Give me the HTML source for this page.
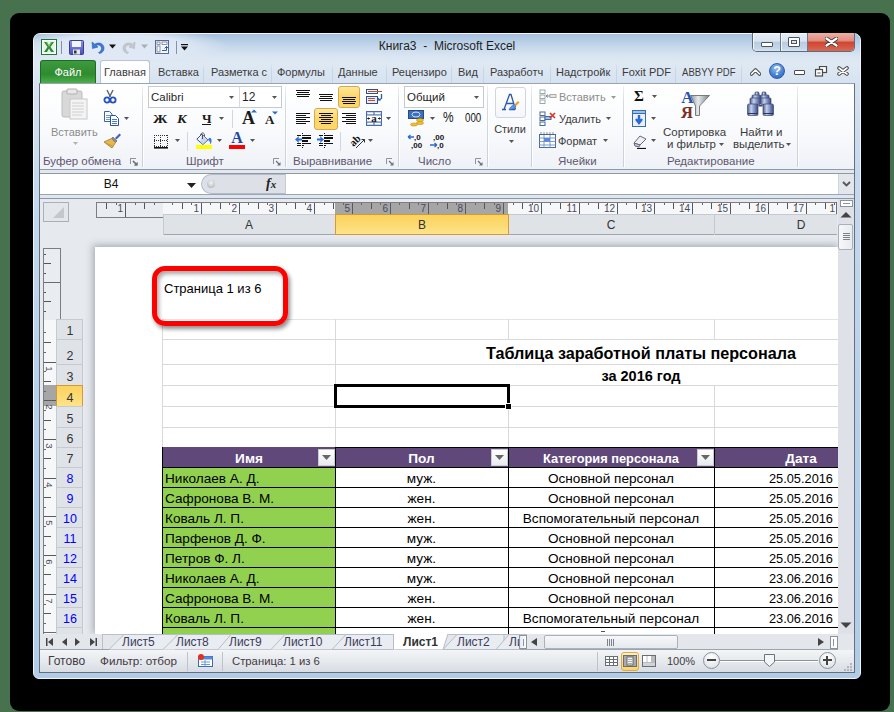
<!DOCTYPE html><html><head><meta charset="utf-8"><style>
html,body{margin:0;padding:0;width:894px;height:712px;overflow:hidden;background:#48714d;}
body{position:relative;font-family:"Liberation Sans",sans-serif;}
div,svg,span{position:absolute;box-sizing:border-box;}
.t{font-size:11px;color:#2b2b2b;}
</style></head><body>
<div style="left:10px;top:13px;width:880px;height:698px;background:#000;border-radius:9px;"></div>
<div style="left:33px;top:33px;width:828px;height:646px;background:linear-gradient(#a6c1de 0px,#c4d7eb 12px,#dae5f2 22px,#dfe9f4 30px,#d6e2f0 50px,#c5d9ee 140px,#b6d0ea 370px,#b0cce7 100%);border-radius:7px 7px 6px 6px;border:1px solid #eef5fc;"></div>
<div style="left:34px;top:34px;width:210px;height:26px;background:radial-gradient(ellipse 110px 20px at 85px 13px,rgba(224,233,245,0.95) 60%,rgba(224,233,245,0) 100%);"></div>
<svg style="left:41px;top:39px;" width="16" height="16" viewBox="0 0 16 16"><rect x="0.5" y="0.5" width="15" height="15" fill="#fff" stroke="#1e7a33"/><rect x="2" y="2" width="12" height="12" fill="#e8f4e8"/><path d="M3 3L6 3L8 6.5L10 3L13 3L9.5 8L13 13L10 13L8 9.5L6 13L3 13L6.5 8Z" fill="#2a8c3a"/><path d="M6 3L8 6.5L10 3L11 3L8 8L5 3Z" fill="#7ecb5a"/></svg>
<svg style="left:69px;top:40px;" width="15" height="15" viewBox="0 0 15 15"><defs><linearGradient id="sv" x1="0" y1="0" x2="0" y2="1"><stop offset="0" stop-color="#8f93e8"/><stop offset="1" stop-color="#4a4fb8"/></linearGradient></defs><rect x="0.5" y="0.5" width="14" height="14" rx="1" fill="url(#sv)" stroke="#3a3f90"/><rect x="3" y="1" width="9" height="6" fill="#f2f4fb"/><rect x="4" y="9.5" width="7" height="5" fill="#e4e6f2"/><rect x="5" y="10.5" width="2.5" height="3" fill="#333"/></svg>
<div style="left:61px;top:41px;width:1px;height:13px;background:#7f93ab;"></div>
<svg style="left:90px;top:40px;" width="15" height="14" viewBox="0 0 15 14"><path d="M2 2 L2.5 8.5 L8 7 L6 5.5 C8.5 4.2 11.5 5.5 11.5 8.5 C11.5 10.5 10 12 8.5 12.5 L9.5 13.5 C12.5 13 14 10.5 14 8.2 C14 3.5 8.5 1.5 4.8 4.2Z" fill="#3a7ad8" stroke="#2a5cb0" stroke-width="0.6"/></svg>
<svg style="left:109px;top:44px;" width="7" height="5" viewBox="0 0 7 5"><path d="M0 0.5H7L3.5 4.5Z" fill="#111"/></svg>
<svg style="left:122px;top:40px;" width="15" height="14" viewBox="0 0 15 14"><path d="M13 2 L12.5 8.5 L7 7 L9 5.5 C6.5 4.2 3.5 5.5 3.5 8.5 C3.5 10.5 5 12 6.5 12.5 L5.5 13.5 C2.5 13 1 10.5 1 8.2 C1 3.5 6.5 1.5 10.2 4.2Z" fill="#c4c9cf" stroke="#b0b6bd" stroke-width="0.6"/></svg>
<svg style="left:141px;top:44px;" width="7" height="5" viewBox="0 0 7 5"><path d="M0 0.5H7L3.5 4.5Z" fill="#a8b0b8"/></svg>
<svg style="left:155px;top:40px;" width="14" height="14" viewBox="0 0 14 14"><rect x="0.5" y="0.5" width="13" height="13" fill="#f4f7fb" stroke="#5a6a90"/><rect x="2" y="2" width="3" height="2.5" fill="#fff" stroke="#5a6a90" stroke-width="0.7"/><rect x="7" y="2" width="5" height="2.5" fill="#fff" stroke="#5a6a90" stroke-width="0.7"/><rect x="2" y="6" width="3" height="6" fill="#fff" stroke="#5a6a90" stroke-width="0.7"/><path d="M7 10.5H11.5M11.5 6V10.5M9.5 8.5L11.5 6.5L13 8" stroke="#2a5cb0" stroke-width="1" fill="none"/></svg>
<div style="left:176px;top:41px;width:1px;height:13px;background:#7f93ab;"></div>
<svg style="left:181px;top:44px;" width="7" height="7" viewBox="0 0 7 7"><rect x="0" y="0" width="7" height="1.2" fill="#111"/><path d="M0 2.5H7L3.5 6.5Z" fill="#111"/></svg>
<div style="left:330px;top:37px;height:18px;line-height:18px;width:234px;text-align:center;white-space:nowrap;font-size:12px;color:#1e1e1e;">Книга3 &nbsp;- &nbsp;Microsoft Excel</div>
<div style="left:752px;top:33px;width:103px;height:19px;border:1px solid #5f6b7a;border-top:none;border-radius:0 0 5px 5px;overflow:hidden;"><div style="left:0;top:0;width:28px;height:18px;background:linear-gradient(#e6edf5 0,#d9e4ef 45%,#b9cde2 52%,#c4d6ea 85%,#d8e4f0 100%);border-right:1px solid #6a7888;box-shadow:inset 1px 1px 0 #f4f8fc;"></div><div style="left:28px;top:0;width:27px;height:18px;background:linear-gradient(#e6edf5 0,#d9e4ef 45%,#b9cde2 52%,#c4d6ea 85%,#d8e4f0 100%);border-right:1px solid #6a7888;box-shadow:inset 1px 1px 0 #f4f8fc;"></div><div style="left:55px;top:0;width:47px;height:18px;background:linear-gradient(#eab0a6 0,#e08b7e 45%,#d2432f 50%,#d76a55 100%);"></div></div>
<div style="left:761px;top:42px;width:12px;height:5px;background:#fff;border:1px solid #4a5462;border-radius:1px;"></div>
<div style="left:788px;top:37px;width:12px;height:10px;background:#fff;border:1px solid #4a5462;border-radius:1px;"></div>
<div style="left:791px;top:40px;width:6px;height:4px;background:#dde3ea;border:1px solid #4a5462;"></div>
<svg style="left:825px;top:37px;" width="13" height="10" viewBox="0 0 13 10"><path d="M1.5 1.5 L11.5 8.5 M11.5 1.5 L1.5 8.5" stroke="#3b3b3b" stroke-width="4" stroke-linecap="round"/><path d="M1.5 1.5 L11.5 8.5 M11.5 1.5 L1.5 8.5" stroke="#fff" stroke-width="2.2" stroke-linecap="round"/></svg>
<div style="left:40px;top:60px;width:56px;height:23px;background:linear-gradient(#3e9a3e 0,#2f8a31 60%,#4bb048 100%);border:1px solid #1f6b24;border-bottom:none;border-radius:3px 3px 0 0;"></div>
<div style="left:40px;top:63px;height:18px;line-height:18px;width:56px;text-align:center;white-space:nowrap;font-size:11px;color:#fff;">Файл</div>
<div style="left:100px;top:60px;width:50px;height:24px;background:linear-gradient(#fff,#fbfcfd);border:1px solid #b6c3d4;border-bottom:none;border-radius:3px 3px 0 0;"></div>
<div style="left:104px;top:63px;height:18px;line-height:18px;width:45px;white-space:nowrap;font-size:11px;color:#3b3b3b;overflow:hidden;">Главная</div>
<div style="left:158px;top:63px;height:18px;line-height:18px;width:44px;white-space:nowrap;font-size:11px;color:#3b3b3b;overflow:hidden;">Вставка</div>
<div style="left:203px;top:63px;width:1px;height:20px;background:linear-gradient(rgba(200,212,228,0),#c8d4e2 40%,#c8d4e2);"></div>
<div style="left:211px;top:63px;height:18px;line-height:18px;width:58px;white-space:nowrap;font-size:11px;color:#3b3b3b;overflow:hidden;">Разметка с</div>
<div style="left:271px;top:63px;width:1px;height:20px;background:linear-gradient(rgba(200,212,228,0),#c8d4e2 40%,#c8d4e2);"></div>
<div style="left:277px;top:63px;height:18px;line-height:18px;width:52px;white-space:nowrap;font-size:11px;color:#3b3b3b;overflow:hidden;">Формулы</div>
<div style="left:332px;top:63px;width:1px;height:20px;background:linear-gradient(rgba(200,212,228,0),#c8d4e2 40%,#c8d4e2);"></div>
<div style="left:338px;top:63px;height:18px;line-height:18px;width:45px;white-space:nowrap;font-size:11px;color:#3b3b3b;overflow:hidden;">Данные</div>
<div style="left:386px;top:63px;width:1px;height:20px;background:linear-gradient(rgba(200,212,228,0),#c8d4e2 40%,#c8d4e2);"></div>
<div style="left:392px;top:63px;height:18px;line-height:18px;width:57px;white-space:nowrap;font-size:11px;color:#3b3b3b;overflow:hidden;">Рецензиро</div>
<div style="left:451px;top:63px;width:1px;height:20px;background:linear-gradient(rgba(200,212,228,0),#c8d4e2 40%,#c8d4e2);"></div>
<div style="left:458px;top:63px;height:18px;line-height:18px;width:23px;white-space:nowrap;font-size:11px;color:#3b3b3b;overflow:hidden;">Вид</div>
<div style="left:483px;top:63px;width:1px;height:20px;background:linear-gradient(rgba(200,212,228,0),#c8d4e2 40%,#c8d4e2);"></div>
<div style="left:490px;top:63px;height:18px;line-height:18px;width:57px;white-space:nowrap;font-size:11px;color:#3b3b3b;overflow:hidden;">Разработч</div>
<div style="left:550px;top:63px;width:1px;height:20px;background:linear-gradient(rgba(200,212,228,0),#c8d4e2 40%,#c8d4e2);"></div>
<div style="left:556px;top:63px;height:18px;line-height:18px;width:58px;white-space:nowrap;font-size:11px;color:#3b3b3b;overflow:hidden;">Надстройк</div>
<div style="left:616px;top:63px;width:1px;height:20px;background:linear-gradient(rgba(200,212,228,0),#c8d4e2 40%,#c8d4e2);"></div>
<div style="left:622px;top:63px;height:18px;line-height:18px;width:51px;white-space:nowrap;font-size:11px;color:#3b3b3b;overflow:hidden;">Foxit PDF</div>
<div style="left:675px;top:63px;width:1px;height:20px;background:linear-gradient(rgba(200,212,228,0),#c8d4e2 40%,#c8d4e2);"></div>
<div style="left:682px;top:63px;height:18px;line-height:18px;width:62px;white-space:nowrap;font-size:11px;color:#3b3b3b;overflow:hidden;transform:scaleX(0.87);transform-origin:0 0;">ABBYY PDF</div>
<div style="left:741px;top:63px;width:1px;height:20px;background:linear-gradient(rgba(200,212,228,0),#c8d4e2 40%,#c8d4e2);"></div>
<svg style="left:750px;top:67px;" width="11" height="9" viewBox="0 0 11 9"><path d="M1.5 7 L5.5 3 L9.5 7" fill="none" stroke="#4a4a4a" stroke-width="3.6" stroke-linejoin="round" stroke-linecap="round"/><path d="M1.5 7 L5.5 3 L9.5 7" fill="none" stroke="#fff" stroke-width="1.6" stroke-linejoin="round" stroke-linecap="round"/></svg>
<div style="left:769px;top:63px;width:16px;height:16px;border-radius:50%;background:radial-gradient(circle at 45% 30%,#8fc0f4,#3f78cc 65%,#2a5eb0);border:1px solid #2f5fa8;"></div>
<div style="left:769px;top:63px;height:16px;line-height:16px;width:16px;text-align:center;white-space:nowrap;font-size:12.5px;font-weight:bold;color:#fff;">?</div>
<div style="left:794px;top:70px;width:11px;height:5px;background:#fff;border:1px solid #4a4a4a;border-radius:1px;"></div>
<svg style="left:814px;top:66px;" width="14" height="11" viewBox="0 0 14 11"><rect x="5.5" y="0.5" width="7" height="6" fill="#fff" stroke="#4a4a4a" stroke-width="1.2"/><rect x="1.5" y="3.5" width="7" height="6.5" fill="#fff" stroke="#4a4a4a" stroke-width="1.2"/><rect x="3.5" y="6" width="3" height="2" fill="#aaa"/></svg>
<svg style="left:837px;top:66px;" width="12" height="10" viewBox="0 0 12 10"><path d="M2 2 L10 8 M10 2 L2 8" stroke="#4a4a4a" stroke-width="3.6" stroke-linecap="round"/><path d="M2 2 L10 8 M10 2 L2 8" stroke="#fff" stroke-width="1.6" stroke-linecap="round"/></svg>
<div style="left:39px;top:83px;width:816px;height:87px;background:linear-gradient(#ffffff 0,#fafbfd 50%,#eef1f6 100%);"></div>
<div style="left:39px;top:169px;width:816px;height:1px;background:#8f9aa8;"></div>
<div style="left:39px;top:170px;width:816px;height:3px;background:#e4e8ee;"></div>
<div style="left:39px;top:173px;width:816px;height:1px;background:#8f9aa8;"></div>
<div style="left:142px;top:86px;width:1px;height:81px;background:linear-gradient(rgba(200,208,220,0.3),#d5dbe4 20%,#c9d0da 100%);"></div>
<div style="left:143px;top:86px;width:1px;height:81px;background:rgba(255,255,255,0.9);"></div>
<div style="left:285px;top:86px;width:1px;height:81px;background:linear-gradient(rgba(200,208,220,0.3),#d5dbe4 20%,#c9d0da 100%);"></div>
<div style="left:286px;top:86px;width:1px;height:81px;background:rgba(255,255,255,0.9);"></div>
<div style="left:398px;top:86px;width:1px;height:81px;background:linear-gradient(rgba(200,208,220,0.3),#d5dbe4 20%,#c9d0da 100%);"></div>
<div style="left:399px;top:86px;width:1px;height:81px;background:rgba(255,255,255,0.9);"></div>
<div style="left:487px;top:86px;width:1px;height:81px;background:linear-gradient(rgba(200,208,220,0.3),#d5dbe4 20%,#c9d0da 100%);"></div>
<div style="left:488px;top:86px;width:1px;height:81px;background:rgba(255,255,255,0.9);"></div>
<div style="left:531px;top:86px;width:1px;height:81px;background:linear-gradient(rgba(200,208,220,0.3),#d5dbe4 20%,#c9d0da 100%);"></div>
<div style="left:532px;top:86px;width:1px;height:81px;background:rgba(255,255,255,0.9);"></div>
<div style="left:623px;top:86px;width:1px;height:81px;background:linear-gradient(rgba(200,208,220,0.3),#d5dbe4 20%,#c9d0da 100%);"></div>
<div style="left:624px;top:86px;width:1px;height:81px;background:rgba(255,255,255,0.9);"></div>
<div style="left:797px;top:86px;width:1px;height:81px;background:linear-gradient(rgba(200,208,220,0.3),#d5dbe4 20%,#c9d0da 100%);"></div>
<div style="left:798px;top:86px;width:1px;height:81px;background:rgba(255,255,255,0.9);"></div>
<div style="left:43px;top:153px;height:16px;line-height:16px;white-space:nowrap;font-size:11.5px;color:#5f5770;">Буфер обмена</div>
<div style="left:186px;top:153px;height:16px;line-height:16px;white-space:nowrap;font-size:11.5px;color:#5f5770;">Шрифт</div>
<div style="left:293px;top:153px;height:16px;line-height:16px;white-space:nowrap;font-size:11.5px;color:#5f5770;">Выравнивание</div>
<div style="left:418px;top:153px;height:16px;line-height:16px;white-space:nowrap;font-size:11.5px;color:#5f5770;">Число</div>
<div style="left:558px;top:153px;height:16px;line-height:16px;white-space:nowrap;font-size:11.5px;color:#5f5770;">Ячейки</div>
<div style="left:667px;top:153px;height:16px;line-height:16px;white-space:nowrap;font-size:11.5px;color:#5f5770;">Редактирование</div>
<svg style="left:130px;top:158px;" width="8" height="8" viewBox="0 0 8 8"><path d="M0.5 6V0.5H6" fill="none" stroke="#8a939e"/><path d="M3 3L6.5 6.5" stroke="#6a737e" stroke-width="1.2"/><path d="M7.5 4V7.5H4Z" fill="#6a737e"/></svg>
<svg style="left:273px;top:158px;" width="8" height="8" viewBox="0 0 8 8"><path d="M0.5 6V0.5H6" fill="none" stroke="#8a939e"/><path d="M3 3L6.5 6.5" stroke="#6a737e" stroke-width="1.2"/><path d="M7.5 4V7.5H4Z" fill="#6a737e"/></svg>
<svg style="left:386px;top:158px;" width="8" height="8" viewBox="0 0 8 8"><path d="M0.5 6V0.5H6" fill="none" stroke="#8a939e"/><path d="M3 3L6.5 6.5" stroke="#6a737e" stroke-width="1.2"/><path d="M7.5 4V7.5H4Z" fill="#6a737e"/></svg>
<svg style="left:475px;top:158px;" width="8" height="8" viewBox="0 0 8 8"><path d="M0.5 6V0.5H6" fill="none" stroke="#8a939e"/><path d="M3 3L6.5 6.5" stroke="#6a737e" stroke-width="1.2"/><path d="M7.5 4V7.5H4Z" fill="#6a737e"/></svg>
<svg style="left:61px;top:88px;" width="28" height="32" viewBox="0 0 28 32"><rect x="1" y="3" width="20" height="26" rx="2" fill="#d8d8d8" stroke="#bdbdbd"/><rect x="6" y="1" width="10" height="5" rx="1" fill="#e8e8e8" stroke="#b0b0b0"/><rect x="9" y="11" width="17" height="20" fill="#f4f4f4" stroke="#c8c8c8"/><path d="M11 15H23M11 18H23M11 21H23M11 24H23M11 27H21" stroke="#d0d0d0"/></svg>
<div style="left:51px;top:124px;height:16px;line-height:16px;white-space:nowrap;font-size:11px;color:#8c8c8c;">Вставить</div>
<svg style="left:73px;top:142px;" width="5" height="3" viewBox="0 0 5 3"><path d="M0 0H5L2.5 3Z" fill="#b0b0b0"/></svg>
<svg style="left:103px;top:89px;" width="14" height="15" viewBox="0 0 14 15"><path d="M4 1 L7.5 8 M10 1 L6.5 8" stroke="#5a6470" stroke-width="1.4"/><circle cx="4" cy="11" r="2.6" fill="none" stroke="#2450c0" stroke-width="1.8"/><circle cx="10" cy="11" r="2.6" fill="none" stroke="#2450c0" stroke-width="1.8"/></svg>
<svg style="left:103px;top:111px;" width="17" height="15" viewBox="0 0 17 15"><path d="M1.5 0.5H6.5L9 3V10.5H1.5Z" fill="#fff" stroke="#3a62b0"/><path d="M3 4.5H7M3 6.5H7M3 8.5H7" stroke="#6a9ad8"/><path d="M7.5 4.5H12.5L15.5 7.5V14.5H7.5Z" fill="#fff" stroke="#2a52a0"/><path d="M9 8.5H14M9 10.5H14M9 12.5H14" stroke="#4a7ad0"/></svg>
<svg style="left:124px;top:117px;" width="5" height="3" viewBox="0 0 5 3"><path d="M0 0H5L2.5 3Z" fill="#555"/></svg>
<svg style="left:103px;top:132px;" width="18" height="17" viewBox="0 0 18 17"><path d="M12 6 L16.5 1.5 L18 3 L13.5 7.5Z" fill="#3a62c0"/><path d="M10 5 L14 9 L12.5 10.5 L8.5 6.5Z" fill="#8a8f98" stroke="#555" stroke-width="0.6"/><path d="M1 10 L8.5 6.5 L12.5 10.5 L9 16Z" fill="#e8b850" stroke="#9a7628" stroke-width="0.8"/><path d="M3 11L9.5 14" stroke="#c89a3a"/></svg>
<div style="left:148px;top:86px;width:134px;height:22px;background:#fff;border:1px solid #c2cad6;"></div>
<div style="left:239px;top:87px;width:1px;height:20px;background:#d6dce5;"></div>
<div style="left:151px;top:89px;height:17px;line-height:17px;white-space:nowrap;font-size:11.5px;color:#1f1f1f;">Calibri</div>
<svg style="left:229px;top:96px;" width="5" height="3" viewBox="0 0 5 3"><path d="M0 0H5L2.5 3Z" fill="#555"/></svg>
<div style="left:242px;top:89px;height:16px;line-height:16px;white-space:nowrap;font-size:12px;color:#1f1f1f;">12</div>
<svg style="left:272px;top:96px;" width="5" height="3" viewBox="0 0 5 3"><path d="M0 0H5L2.5 3Z" fill="#555"/></svg>
<div style="left:153px;top:110px;height:17px;line-height:17px;white-space:nowrap;font-family:'Liberation Serif',serif;font-weight:bold;color:#1a1a1a;font-size:13px;transform:scaleX(1.12);transform-origin:0 0;">Ж</div>
<div style="left:177px;top:110px;height:17px;line-height:17px;white-space:nowrap;font-family:'Liberation Serif',serif;font-weight:bold;color:#1a1a1a;font-size:13px;transform:scaleX(1.1);transform-origin:0 0;"><i>К</i></div>
<div style="left:202px;top:110px;height:17px;line-height:17px;white-space:nowrap;font-family:'Liberation Serif',serif;font-weight:bold;color:#1a1a1a;font-size:13px;">Ч</div>
<div style="left:202px;top:124px;width:9px;height:1px;background:#1a1a1a;"></div>
<svg style="left:219px;top:117px;" width="5" height="3" viewBox="0 0 5 3"><path d="M0 0H5L2.5 3Z" fill="#555"/></svg>
<div style="left:232px;top:110px;width:1px;height:18px;background:#d2d7de;"></div>
<div style="left:242px;top:109px;height:18px;line-height:18px;white-space:nowrap;font-family:'Liberation Serif',serif;font-weight:bold;color:#1a1a1a;font-size:18px;font-weight:bold;">A</div>
<svg style="left:251px;top:109px;" width="6" height="4" viewBox="0 0 6 4"><path d="M0 3.5L3 0.5L6 3.5Z" fill="#2a6ad0"/></svg>
<div style="left:265px;top:113px;height:14px;line-height:14px;white-space:nowrap;font-family:'Liberation Serif',serif;font-weight:bold;color:#1a1a1a;font-size:13px;">A</div>
<svg style="left:272px;top:111px;" width="6" height="4" viewBox="0 0 6 4"><path d="M0 0.5L3 3.5L6 0.5Z" fill="#2a6ad0"/></svg>
<svg style="left:154px;top:135px;" width="14" height="14" viewBox="0 0 14 14"><g fill="#333"><rect x="0" y="0" width="1" height="1"/><rect x="2" y="0" width="1" height="1"/><rect x="4" y="0" width="1" height="1"/><rect x="6" y="0" width="1" height="1"/><rect x="8" y="0" width="1" height="1"/><rect x="10" y="0" width="1" height="1"/><rect x="12" y="0" width="1" height="1"/><rect x="0" y="5" width="1" height="1"/><rect x="2" y="5" width="1" height="1"/><rect x="4" y="5" width="1" height="1"/><rect x="6" y="5" width="1" height="1"/><rect x="8" y="5" width="1" height="1"/><rect x="10" y="5" width="1" height="1"/><rect x="12" y="5" width="1" height="1"/><rect x="0" y="11" width="1" height="1"/><rect x="2" y="11" width="1" height="1"/><rect x="4" y="11" width="1" height="1"/><rect x="6" y="11" width="1" height="1"/><rect x="8" y="11" width="1" height="1"/><rect x="10" y="11" width="1" height="1"/><rect x="12" y="11" width="1" height="1"/><rect x="0" y="0" width="1" height="1"/><rect x="0" y="2" width="1" height="1"/><rect x="0" y="4" width="1" height="1"/><rect x="0" y="6" width="1" height="1"/><rect x="0" y="8" width="1" height="1"/><rect x="0" y="10" width="1" height="1"/><rect x="6" y="0" width="1" height="1"/><rect x="6" y="2" width="1" height="1"/><rect x="6" y="4" width="1" height="1"/><rect x="6" y="6" width="1" height="1"/><rect x="6" y="8" width="1" height="1"/><rect x="6" y="10" width="1" height="1"/><rect x="13" y="0" width="1" height="1"/><rect x="13" y="2" width="1" height="1"/><rect x="13" y="4" width="1" height="1"/><rect x="13" y="6" width="1" height="1"/><rect x="13" y="8" width="1" height="1"/><rect x="13" y="10" width="1" height="1"/></g><rect x="0" y="12" width="14" height="1.6" fill="#111"/></svg>
<svg style="left:175px;top:139px;" width="5" height="3" viewBox="0 0 5 3"><path d="M0 0H5L2.5 3Z" fill="#555"/></svg>
<div style="left:187px;top:132px;width:1px;height:19px;background:#d2d7de;"></div>
<svg style="left:196px;top:132px;" width="18" height="17" viewBox="0 0 18 17"><path d="M0.8 7.2 L6 2 L12 8 L6.8 12.5Z" fill="#f4f7fc" stroke="#2f4f8a" stroke-width="1"/><path d="M6 2 L12 8 L6.8 12.5 L4 10Z" fill="#b8c8e4" opacity="0.7"/><path d="M4.5 3.5 C4.5 0 9 0 8.5 4" fill="none" stroke="#555" stroke-width="1"/><path d="M6.5 3 V7" stroke="#555" stroke-width="1"/><path d="M12 8 C13 5 15 5 15.5 8 C15.8 10 15 12 14 12 C14.5 10 13.5 9 12 8Z" fill="#3a78d8"/><rect x="0" y="13" width="16" height="4" fill="#ffff00"/></svg>
<svg style="left:217px;top:139px;" width="5" height="3" viewBox="0 0 5 3"><path d="M0 0H5L2.5 3Z" fill="#555"/></svg>
<div style="left:229px;top:129px;height:17px;line-height:17px;width:16px;text-align:center;white-space:nowrap;font-family:'Liberation Serif',serif;font-weight:bold;color:#1a1a1a;font-size:16px;color:#2246a0;">A</div>
<div style="left:229px;top:145px;width:16px;height:4px;background:#f00;"></div>
<svg style="left:250px;top:139px;" width="5" height="3" viewBox="0 0 5 3"><path d="M0 0H5L2.5 3Z" fill="#555"/></svg>
<div style="left:296px;top:90px;width:14px;height:1px;background:#111;"></div>
<div style="left:297px;top:92px;width:12px;height:1px;background:#111;"></div>
<div style="left:296px;top:94px;width:14px;height:1px;background:#111;"></div>
<div style="left:297px;top:96px;width:12px;height:1px;background:#111;"></div>
<div style="left:319px;top:94px;width:14px;height:1px;background:#111;"></div>
<div style="left:320px;top:96px;width:12px;height:1px;background:#111;"></div>
<div style="left:319px;top:98px;width:14px;height:1px;background:#111;"></div>
<div style="left:320px;top:100px;width:12px;height:1px;background:#111;"></div>
<div style="left:338px;top:86px;width:22px;height:22px;border:1px solid #d6a84a;border-radius:3px;background:linear-gradient(#fde89a,#fbd56a 50%,#fcd86c);"></div>
<div style="left:342px;top:97px;width:14px;height:1px;background:#111;"></div>
<div style="left:343px;top:99px;width:12px;height:1px;background:#111;"></div>
<div style="left:342px;top:101px;width:14px;height:1px;background:#111;"></div>
<div style="left:343px;top:103px;width:12px;height:1px;background:#111;"></div>
<svg style="left:366px;top:88px;" width="18" height="17" viewBox="0 0 18 17"><rect x="0.5" y="1.5" width="11" height="4" fill="#eef4fb" stroke="#2f4f86"/><path d="M2 3.5H16" stroke="#c0502a" stroke-width="1"/><rect x="0.5" y="8.5" width="11" height="7" fill="#e4eefa" stroke="#2f4f86"/><path d="M2 10.5H9M2 12.5H9" stroke="#c0502a"/><path d="M15.5 6V10.5L13 12" stroke="#2f5aa0" stroke-width="1.3" fill="none"/><path d="M12 9.5V12.5H15Z" fill="#2f5aa0"/></svg>
<div style="left:296px;top:113px;width:14px;height:1px;background:#111;"></div>
<div style="left:296px;top:115px;width:10px;height:1px;background:#111;"></div>
<div style="left:296px;top:117px;width:14px;height:1px;background:#111;"></div>
<div style="left:296px;top:119px;width:10px;height:1px;background:#111;"></div>
<div style="left:296px;top:121px;width:14px;height:1px;background:#111;"></div>
<div style="left:296px;top:123px;width:10px;height:1px;background:#111;"></div>
<div style="left:314px;top:108px;width:24px;height:22px;border:1px solid #d6a84a;border-radius:3px;background:linear-gradient(#fde89a,#fbd56a 50%,#fcd86c);"></div>
<div style="left:319px;top:113px;width:14px;height:1px;background:#111;"></div>
<div style="left:321px;top:115px;width:10px;height:1px;background:#111;"></div>
<div style="left:319px;top:117px;width:14px;height:1px;background:#111;"></div>
<div style="left:321px;top:119px;width:10px;height:1px;background:#111;"></div>
<div style="left:319px;top:121px;width:14px;height:1px;background:#111;"></div>
<div style="left:321px;top:123px;width:10px;height:1px;background:#111;"></div>
<div style="left:342px;top:113px;width:14px;height:1px;background:#111;"></div>
<div style="left:346px;top:115px;width:10px;height:1px;background:#111;"></div>
<div style="left:342px;top:117px;width:14px;height:1px;background:#111;"></div>
<div style="left:346px;top:119px;width:10px;height:1px;background:#111;"></div>
<div style="left:342px;top:121px;width:14px;height:1px;background:#111;"></div>
<div style="left:346px;top:123px;width:10px;height:1px;background:#111;"></div>
<svg style="left:366px;top:111px;" width="16" height="15" viewBox="0 0 16 15"><rect x="0.5" y="0.5" width="15" height="14" fill="#c8d8ee" stroke="#4a6aa8"/><path d="M2 2.5H7M9 2.5H14M2 12.5H7M9 12.5H14" stroke="#fff" stroke-width="1.2"/><path d="M8 0.5V4M8 11V14.5" stroke="#4a6aa8"/><rect x="1" y="4" width="14" height="7" fill="#fff"/><path d="M0.5 4H15.5M0.5 11H15.5" stroke="#4a6aa8"/><path d="M1.5 7.5H4M12 7.5H14.5" stroke="#222"/><path d="M2.5 6.5L1.5 7.5L2.5 8.5M13.5 6.5L14.5 7.5L13.5 8.5" stroke="#222" fill="none"/><text x="8" y="10.5" font-size="11" font-family="Liberation Serif" font-weight="bold" text-anchor="middle" fill="#222">a</text></svg>
<svg style="left:386px;top:117px;" width="5" height="3" viewBox="0 0 5 3"><path d="M0 0H5L2.5 3Z" fill="#555"/></svg>
<div style="left:302px;top:133px;width:1px;height:1px;background:#111;"></div>
<div style="left:302px;top:147px;width:1px;height:1px;background:#111;"></div>
<div style="left:297px;top:135px;width:4px;height:1px;background:#111;"></div>
<div style="left:297px;top:143px;width:4px;height:1px;background:#111;"></div>
<div style="left:297px;top:145px;width:4px;height:1px;background:#111;"></div>
<div style="left:302px;top:135px;width:9px;height:1px;background:#111;"></div>
<div style="left:302px;top:137px;width:9px;height:2px;background:#111;"></div>
<div style="left:302px;top:140px;width:6px;height:2px;background:#111;"></div>
<div style="left:302px;top:143px;width:9px;height:1px;background:#111;"></div>
<div style="left:302px;top:145px;width:2px;height:1px;background:#111;"></div>
<svg style="left:295px;top:136px;" width="7" height="7" viewBox="0 0 7 7"><path d="M0 3.5 L4 0 L3.5 2.5 H7 V4.5 H3.5 L4 7Z" fill="#2f6ad8"/></svg>
<div style="left:324px;top:133px;width:1px;height:1px;background:#111;"></div>
<div style="left:324px;top:147px;width:1px;height:1px;background:#111;"></div>
<div style="left:319px;top:135px;width:4px;height:1px;background:#111;"></div>
<div style="left:319px;top:143px;width:4px;height:1px;background:#111;"></div>
<div style="left:319px;top:145px;width:4px;height:1px;background:#111;"></div>
<div style="left:324px;top:135px;width:9px;height:1px;background:#111;"></div>
<div style="left:324px;top:137px;width:9px;height:2px;background:#111;"></div>
<div style="left:324px;top:140px;width:6px;height:2px;background:#111;"></div>
<div style="left:324px;top:143px;width:9px;height:1px;background:#111;"></div>
<div style="left:324px;top:145px;width:2px;height:1px;background:#111;"></div>
<svg style="left:317px;top:136px;" width="7" height="7" viewBox="0 0 7 7"><path d="M7 3.5 L3 0 L3.5 2.5 H0 V4.5 H3.5 L3 7Z" fill="#2f6ad8"/></svg>
<div style="left:340px;top:132px;width:1px;height:19px;background:#d2d7de;"></div>
<svg style="left:348px;top:132px;" width="20" height="18" viewBox="0 0 20 18"><text x="0" y="0" font-size="10.5" font-family="Liberation Serif" font-weight="bold" fill="#111" transform="translate(5.5 15) rotate(-45)">ab</text><path d="M8 16 L16.5 7.5" stroke="#333" stroke-width="1"/><path d="M13.5 7.5H16.5V10.5" stroke="#333" fill="none"/></svg>
<svg style="left:368px;top:139px;" width="5" height="3" viewBox="0 0 5 3"><path d="M0 0H5L2.5 3Z" fill="#555"/></svg>
<div style="left:404px;top:86px;width:80px;height:22px;background:#fff;border:1px solid #c2cad6;"></div>
<div style="left:407px;top:89px;height:17px;line-height:17px;white-space:nowrap;font-size:11.5px;color:#1f1f1f;">Общий</div>
<svg style="left:474px;top:96px;" width="5" height="3" viewBox="0 0 5 3"><path d="M0 0H5L2.5 3Z" fill="#555"/></svg>
<svg style="left:408px;top:110px;" width="17" height="17" viewBox="0 0 17 17"><rect x="0.5" y="0.5" width="15" height="8" fill="#3a70c0" stroke="#2a4a80"/><ellipse cx="8" cy="4.5" rx="4" ry="2.5" fill="none" stroke="#cfe0f8"/><ellipse cx="12" cy="10" rx="3.5" ry="1.5" fill="#f2c230" stroke="#b88a10" stroke-width="0.6"/><ellipse cx="12" cy="13" rx="3.5" ry="1.5" fill="#f2c230" stroke="#b88a10" stroke-width="0.6"/><ellipse cx="6" cy="14.5" rx="3.5" ry="1.5" fill="#f2c230" stroke="#b88a10" stroke-width="0.6"/></svg>
<svg style="left:430px;top:117px;" width="5" height="3" viewBox="0 0 5 3"><path d="M0 0H5L2.5 3Z" fill="#555"/></svg>
<div style="left:443px;top:109px;height:17px;line-height:17px;white-space:nowrap;font-size:14px;color:#1a1a1a;transform:scaleX(0.85);transform-origin:0 0;">%</div>
<div style="left:465px;top:110px;height:17px;line-height:17px;white-space:nowrap;font-size:12.5px;color:#1a1a1a;transform:scaleX(0.78);transform-origin:0 0;">000</div>
<svg style="left:407px;top:132px;" width="18" height="18" viewBox="0 0 18 18"><text x="7" y="7.5" font-size="8" font-family="Liberation Sans" font-weight="bold" fill="#111">,0</text><text x="4" y="16" font-size="8" font-family="Liberation Sans" font-weight="bold" fill="#111">,00</text><path d="M1 5H7M1 5L3.5 3M1 5L3.5 7" stroke="#2a6ad0" stroke-width="1.3"/></svg>
<svg style="left:429px;top:132px;" width="18" height="18" viewBox="0 0 18 18"><text x="4" y="7.5" font-size="8" font-family="Liberation Sans" font-weight="bold" fill="#111">,00</text><text x="8" y="16" font-size="8" font-family="Liberation Sans" font-weight="bold" fill="#111">,0</text><path d="M1 13H8M8 13L5.5 11M8 13L5.5 15" stroke="#2a6ad0" stroke-width="1.3"/></svg>
<div style="left:495px;top:87px;width:31px;height:31px;border:1px solid #cfd6df;border-radius:3px;background:linear-gradient(#fff,#f4f6f9);"></div>
<svg style="left:501px;top:93px;" width="20" height="18" viewBox="0 0 20 18"><path d="M1 16.5H5M9 16.5H14M3 16.5L8.5 1.5H10L14.5 16.5M5.5 10.5H12" fill="none" stroke="#2d56b0" stroke-width="1.3"/><path d="M8 17 C9 14 11 12.5 13.5 11.5 L15 13 C14 15 12 16.5 8 17Z" fill="#5a9ae8" stroke="#2a5ab0" stroke-width="0.6"/><path d="M13.5 11.5 L17 8 L18.5 9.5 L15 13Z" fill="#f0a020"/></svg>
<div style="left:494px;top:121px;height:16px;line-height:16px;width:32px;text-align:center;white-space:nowrap;font-size:11px;color:#3b3b3b;">Стили</div>
<svg style="left:509px;top:140px;" width="5" height="3" viewBox="0 0 5 3"><path d="M0 0H5L2.5 3Z" fill="#555"/></svg>
<svg style="left:539px;top:89px;" width="18" height="16" viewBox="0 0 18 16"><rect x="1" y="1" width="5" height="3.5" fill="#fff" stroke="#9aa"/><rect x="1" y="6" width="5" height="3.5" fill="#fff" stroke="#9aa"/><rect x="1" y="11" width="5" height="3.5" fill="#fff" stroke="#9aa"/><rect x="11" y="5.5" width="6" height="3" fill="#e8e8e8" stroke="#aaa"/><path d="M7 7H11M7 7L9 5.5M7 7L9 8.5" stroke="#888"/></svg>
<div style="left:559px;top:89px;height:16px;line-height:16px;white-space:nowrap;font-size:11px;color:#8c8c8c;">Вставить</div>
<svg style="left:611px;top:96px;" width="5" height="3" viewBox="0 0 5 3"><path d="M0 0H5L2.5 3Z" fill="#9a9a9a"/></svg>
<svg style="left:539px;top:111px;" width="18" height="15" viewBox="0 0 18 15"><rect x="1" y="1" width="5" height="3.5" fill="#fff" stroke="#4a6a9a"/><rect x="1" y="6" width="5" height="3.5" fill="#fff" stroke="#4a6a9a"/><rect x="1" y="11" width="5" height="3.5" fill="#fff" stroke="#4a6a9a"/><rect x="6" y="5.5" width="6" height="3" fill="#9ec0ea" stroke="#4a6a9a"/><path d="M11 2L16 7M16 2L11 7" stroke="#e03020" stroke-width="1.6"/></svg>
<div style="left:559px;top:111px;height:16px;line-height:16px;white-space:nowrap;font-size:11px;color:#3b3b3b;">Удалить</div>
<svg style="left:606px;top:117px;" width="5" height="3" viewBox="0 0 5 3"><path d="M0 0H5L2.5 3Z" fill="#555"/></svg>
<svg style="left:539px;top:132px;" width="18" height="16" viewBox="0 0 18 16"><rect x="0.5" y="2.5" width="16" height="13" fill="#fff" stroke="#4a6a9a"/><path d="M0.5 6H16.5M0.5 9.5H16.5M0.5 13H16.5M5 2.5V15.5M11 2.5V15.5" stroke="#7a9acb"/><rect x="5" y="6" width="6" height="3.5" fill="#5a8ad8"/><path d="M2 0.5V3M5 0.5V3M8 0.5V3M11 0.5V3M14 0.5V3" stroke="#333" stroke-dasharray="1 1"/></svg>
<div style="left:558px;top:133px;height:16px;line-height:16px;white-space:nowrap;font-size:11px;color:#3b3b3b;">Формат</div>
<svg style="left:603px;top:139px;" width="5" height="3" viewBox="0 0 5 3"><path d="M0 0H5L2.5 3Z" fill="#555"/></svg>
<div style="left:634px;top:88px;height:17px;line-height:17px;white-space:nowrap;font-family:'Liberation Serif',serif;font-size:15px;font-weight:bold;color:#111;">Σ</div>
<svg style="left:652px;top:95px;" width="5" height="3" viewBox="0 0 5 3"><path d="M0 0H5L2.5 3Z" fill="#555"/></svg>
<svg style="left:632px;top:110px;" width="15" height="17" viewBox="0 0 15 17"><rect x="0.5" y="0.5" width="13" height="16" fill="#e8f0fb" stroke="#3a6ab0"/><rect x="0.5" y="0.5" width="13" height="3" fill="#9cc0ec" stroke="#3a6ab0"/><path d="M7 5V12M4 9L7 13L10 9" stroke="#2a6ad0" stroke-width="2.4" fill="none"/></svg>
<svg style="left:651px;top:117px;" width="5" height="3" viewBox="0 0 5 3"><path d="M0 0H5L2.5 3Z" fill="#555"/></svg>
<svg style="left:632px;top:134px;" width="16" height="15" viewBox="0 0 16 15"><path d="M2 9 L8 2 L14 5 L8 11Z" fill="#f0f0f4" stroke="#606a78"/><path d="M2 9 L8 11 L7 13 L3 12Z" fill="#c8ccd8" stroke="#606a78"/><path d="M5 14.5H14" stroke="#111" stroke-width="1.2"/></svg>
<svg style="left:651px;top:139px;" width="5" height="3" viewBox="0 0 5 3"><path d="M0 0H5L2.5 3Z" fill="#555"/></svg>
<svg style="left:679px;top:88px;" width="32" height="32" viewBox="0 0 32 32"><defs><linearGradient id="fn" x1="0" y1="0" x2="1" y2="0"><stop offset="0" stop-color="#8a9096"/><stop offset="0.4" stop-color="#e8eaec"/><stop offset="1" stop-color="#7a8086"/></linearGradient></defs><path d="M11.5 7.5 H30.5 L20.5 18 V27.5 H16.5 V18 Z" fill="url(#fn)" stroke="#6a7076" stroke-width="0.9"/><text x="8.5" y="15" font-size="17" font-family="Liberation Serif" font-weight="bold" text-anchor="middle" fill="#2a52b0">A</text><text x="8" y="30" font-size="16.5" font-family="Liberation Serif" font-weight="bold" text-anchor="middle" fill="#7a3024">Я</text></svg>
<div style="left:663px;top:124px;height:16px;line-height:16px;white-space:nowrap;font-size:11.5px;color:#3b3b3b;">Сортировка</div>
<div style="left:667px;top:136px;height:16px;line-height:16px;white-space:nowrap;font-size:11.5px;color:#3b3b3b;">и фильтр</div>
<svg style="left:719px;top:143px;" width="5" height="3" viewBox="0 0 5 3"><path d="M0 0H5L2.5 3Z" fill="#555"/></svg>
<svg style="left:746px;top:91px;" width="29" height="26" viewBox="0 0 29 26"><defs><linearGradient id="bn" x1="0" y1="0" x2="1" y2="0"><stop offset="0" stop-color="#4a5a8a"/><stop offset="0.35" stop-color="#c4d0ec"/><stop offset="0.6" stop-color="#8a9ccc"/><stop offset="1" stop-color="#3a4a7a"/></linearGradient></defs><g stroke="#3a4670" stroke-width="0.7" fill="url(#bn)"><rect x="9" y="1" width="4" height="3.5" rx="1"/><rect x="16" y="1" width="4" height="3.5" rx="1"/><rect x="6" y="4" width="8.5" height="3.5" rx="1"/><rect x="14.5" y="4" width="8.5" height="3.5" rx="1"/><rect x="4" y="7" width="10.5" height="6.5" rx="1"/><rect x="14.5" y="7" width="10.5" height="6.5" rx="1"/><rect x="1.5" y="13" width="10.5" height="11.5" rx="1.5"/><rect x="17" y="13" width="10.5" height="11.5" rx="1.5"/></g><path d="M2 22.5H11.5M17.5 22.5H27" stroke="#2a3660" stroke-width="1.2"/><rect x="12.5" y="14" width="4" height="1.5" fill="#3a4670"/></svg>
<div style="left:740px;top:124px;height:16px;line-height:16px;white-space:nowrap;font-size:11.5px;color:#3b3b3b;">Найти и</div>
<div style="left:733px;top:136px;height:16px;line-height:16px;white-space:nowrap;font-size:11.5px;color:#3b3b3b;">выделить</div>
<svg style="left:786px;top:143px;" width="5" height="3" viewBox="0 0 5 3"><path d="M0 0H5L2.5 3Z" fill="#555"/></svg>
<svg style="left:130px;top:158px;" width="8" height="8" viewBox="0 0 8 8"><path d="M0.5 6V0.5H6" fill="none" stroke="#8a939e"/><path d="M3 3L6.5 6.5" stroke="#6a737e" stroke-width="1.2"/><path d="M7.5 4V7.5H4Z" fill="#6a737e"/></svg>
<div style="left:39px;top:174px;width:816px;height:21px;background:#fff;"></div>
<div style="left:39px;top:194px;width:816px;height:1px;background:#9aa6b4;"></div>
<div style="left:39px;top:195px;width:816px;height:3px;background:#dfe6ef;"></div>
<div style="left:39px;top:198px;width:816px;height:1px;background:#8a96a6;"></div>
<div style="left:88px;top:176px;height:17px;line-height:17px;width:46px;text-align:center;white-space:nowrap;font-size:12px;color:#111;">B4</div>
<svg style="left:187px;top:183px;" width="9" height="5" viewBox="0 0 9 5"><path d="M0 0H9L4.5 5Z" fill="#222"/></svg>
<div style="left:201px;top:174px;width:85px;height:20px;background:#dde1e7;border:1px solid #b4bcc7;border-right:1px solid #c6ccd4;border-radius:10px 0 0 10px;"></div>
<div style="left:207px;top:180px;width:8px;height:8px;border-radius:50%;background:radial-gradient(circle at 50% 35%,#f4f4f4,#a8acb2);"></div>
<div style="left:266px;top:175px;height:18px;line-height:18px;white-space:nowrap;font-family:'Liberation Serif',serif;font-weight:bold;font-size:14px;color:#222;"><i>f<span style="position:static;font-size:11px;">x</span></i></div>
<div style="left:838px;top:174px;width:16px;height:20px;background:#e3e7ec;border-left:1px solid #d0d6de;"></div>
<svg style="left:842px;top:181px;" width="9" height="6" viewBox="0 0 9 6"><path d="M1 1L4.5 4.5L8 1" fill="none" stroke="#555" stroke-width="1.8"/></svg>
<div style="left:39px;top:199px;width:799px;height:435px;background:#e6e9ee;"></div>
<div style="left:43px;top:202px;width:26px;height:20px;background:#e3e6eb;border:1px solid #aab0b8;"></div>
<svg style="left:53px;top:207px;" width="11" height="11" viewBox="0 0 11 11"><path d="M11 0V11H0Z" fill="#c4c8ce"/></svg>
<div style="left:96px;top:202px;width:741px;height:16px;border:1px solid #7d7d7d;border-right:none;background:#f6f7f8;"></div>
<div style="left:97px;top:203px;width:66px;height:14px;background:#e9ecf0;"></div>
<div style="left:335px;top:203px;width:173px;height:11px;background:#a6a6a6;"></div>
<div style="left:106px;top:203px;width:1px;height:6px;background:#555;"></div>
<div style="left:116px;top:203px;width:1px;height:2px;background:#666;"></div>
<div style="left:125px;top:203px;width:1px;height:14px;background:#5a5a5a;"></div>
<div style="left:111px;top:203px;height:11px;line-height:11px;width:12px;text-align:right;white-space:nowrap;font-size:10px;color:#4a4a5a;">1</div>
<div style="left:135px;top:203px;width:1px;height:2px;background:#666;"></div>
<div style="left:144px;top:203px;width:1px;height:6px;background:#555;"></div>
<div style="left:154px;top:203px;width:1px;height:2px;background:#666;"></div>
<div style="left:172px;top:203px;width:1px;height:2px;background:#666;"></div>
<div style="left:182px;top:203px;width:1px;height:6px;background:#555;"></div>
<div style="left:191px;top:203px;width:1px;height:2px;background:#666;"></div>
<div style="left:201px;top:203px;width:1px;height:11px;background:#5a5a5a;"></div>
<div style="left:187px;top:203px;height:11px;line-height:11px;width:12px;text-align:right;white-space:nowrap;font-size:10px;color:#4a4a5a;">1</div>
<div style="left:210px;top:203px;width:1px;height:2px;background:#666;"></div>
<div style="left:220px;top:203px;width:1px;height:6px;background:#555;"></div>
<div style="left:229px;top:203px;width:1px;height:2px;background:#666;"></div>
<div style="left:239px;top:203px;width:1px;height:11px;background:#5a5a5a;"></div>
<div style="left:225px;top:203px;height:11px;line-height:11px;width:12px;text-align:right;white-space:nowrap;font-size:10px;color:#4a4a5a;">2</div>
<div style="left:248px;top:203px;width:1px;height:2px;background:#666;"></div>
<div style="left:258px;top:203px;width:1px;height:6px;background:#555;"></div>
<div style="left:267px;top:203px;width:1px;height:2px;background:#666;"></div>
<div style="left:276px;top:203px;width:1px;height:11px;background:#5a5a5a;"></div>
<div style="left:262px;top:203px;height:11px;line-height:11px;width:12px;text-align:right;white-space:nowrap;font-size:10px;color:#4a4a5a;">3</div>
<div style="left:286px;top:203px;width:1px;height:2px;background:#666;"></div>
<div style="left:295px;top:203px;width:1px;height:6px;background:#555;"></div>
<div style="left:305px;top:203px;width:1px;height:2px;background:#666;"></div>
<div style="left:314px;top:203px;width:1px;height:11px;background:#5a5a5a;"></div>
<div style="left:300px;top:203px;height:11px;line-height:11px;width:12px;text-align:right;white-space:nowrap;font-size:10px;color:#4a4a5a;">4</div>
<div style="left:324px;top:203px;width:1px;height:2px;background:#666;"></div>
<div style="left:333px;top:203px;width:1px;height:6px;background:#555;"></div>
<div style="left:343px;top:203px;width:1px;height:2px;background:#666;"></div>
<div style="left:352px;top:203px;width:1px;height:11px;background:#5a5a5a;"></div>
<div style="left:338px;top:203px;height:11px;line-height:11px;width:12px;text-align:right;white-space:nowrap;font-size:10px;color:#4a4a5a;">5</div>
<div style="left:361px;top:203px;width:1px;height:2px;background:#666;"></div>
<div style="left:371px;top:203px;width:1px;height:6px;background:#555;"></div>
<div style="left:380px;top:203px;width:1px;height:2px;background:#666;"></div>
<div style="left:390px;top:203px;width:1px;height:11px;background:#5a5a5a;"></div>
<div style="left:376px;top:203px;height:11px;line-height:11px;width:12px;text-align:right;white-space:nowrap;font-size:10px;color:#4a4a5a;">6</div>
<div style="left:399px;top:203px;width:1px;height:2px;background:#666;"></div>
<div style="left:409px;top:203px;width:1px;height:6px;background:#555;"></div>
<div style="left:418px;top:203px;width:1px;height:2px;background:#666;"></div>
<div style="left:428px;top:203px;width:1px;height:11px;background:#5a5a5a;"></div>
<div style="left:414px;top:203px;height:11px;line-height:11px;width:12px;text-align:right;white-space:nowrap;font-size:10px;color:#4a4a5a;">7</div>
<div style="left:437px;top:203px;width:1px;height:2px;background:#666;"></div>
<div style="left:447px;top:203px;width:1px;height:6px;background:#555;"></div>
<div style="left:456px;top:203px;width:1px;height:2px;background:#666;"></div>
<div style="left:465px;top:203px;width:1px;height:11px;background:#5a5a5a;"></div>
<div style="left:451px;top:203px;height:11px;line-height:11px;width:12px;text-align:right;white-space:nowrap;font-size:10px;color:#4a4a5a;">8</div>
<div style="left:475px;top:203px;width:1px;height:2px;background:#666;"></div>
<div style="left:484px;top:203px;width:1px;height:6px;background:#555;"></div>
<div style="left:494px;top:203px;width:1px;height:2px;background:#666;"></div>
<div style="left:503px;top:203px;width:1px;height:11px;background:#5a5a5a;"></div>
<div style="left:489px;top:203px;height:11px;line-height:11px;width:12px;text-align:right;white-space:nowrap;font-size:10px;color:#4a4a5a;">9</div>
<div style="left:513px;top:203px;width:1px;height:2px;background:#666;"></div>
<div style="left:522px;top:203px;width:1px;height:6px;background:#555;"></div>
<div style="left:532px;top:203px;width:1px;height:2px;background:#666;"></div>
<div style="left:541px;top:203px;width:1px;height:11px;background:#5a5a5a;"></div>
<div style="left:527px;top:203px;height:11px;line-height:11px;width:12px;text-align:right;white-space:nowrap;font-size:10px;color:#4a4a5a;">10</div>
<div style="left:550px;top:203px;width:1px;height:2px;background:#666;"></div>
<div style="left:560px;top:203px;width:1px;height:6px;background:#555;"></div>
<div style="left:569px;top:203px;width:1px;height:2px;background:#666;"></div>
<div style="left:579px;top:203px;width:1px;height:11px;background:#5a5a5a;"></div>
<div style="left:565px;top:203px;height:11px;line-height:11px;width:12px;text-align:right;white-space:nowrap;font-size:10px;color:#4a4a5a;">11</div>
<div style="left:588px;top:203px;width:1px;height:2px;background:#666;"></div>
<div style="left:598px;top:203px;width:1px;height:6px;background:#555;"></div>
<div style="left:607px;top:203px;width:1px;height:2px;background:#666;"></div>
<div style="left:617px;top:203px;width:1px;height:11px;background:#5a5a5a;"></div>
<div style="left:603px;top:203px;height:11px;line-height:11px;width:12px;text-align:right;white-space:nowrap;font-size:10px;color:#4a4a5a;">12</div>
<div style="left:626px;top:203px;width:1px;height:2px;background:#666;"></div>
<div style="left:636px;top:203px;width:1px;height:6px;background:#555;"></div>
<div style="left:645px;top:203px;width:1px;height:2px;background:#666;"></div>
<div style="left:654px;top:203px;width:1px;height:11px;background:#5a5a5a;"></div>
<div style="left:640px;top:203px;height:11px;line-height:11px;width:12px;text-align:right;white-space:nowrap;font-size:10px;color:#4a4a5a;">13</div>
<div style="left:664px;top:203px;width:1px;height:2px;background:#666;"></div>
<div style="left:673px;top:203px;width:1px;height:6px;background:#555;"></div>
<div style="left:683px;top:203px;width:1px;height:2px;background:#666;"></div>
<div style="left:692px;top:203px;width:1px;height:11px;background:#5a5a5a;"></div>
<div style="left:678px;top:203px;height:11px;line-height:11px;width:12px;text-align:right;white-space:nowrap;font-size:10px;color:#4a4a5a;">14</div>
<div style="left:702px;top:203px;width:1px;height:2px;background:#666;"></div>
<div style="left:711px;top:203px;width:1px;height:6px;background:#555;"></div>
<div style="left:721px;top:203px;width:1px;height:2px;background:#666;"></div>
<div style="left:730px;top:203px;width:1px;height:11px;background:#5a5a5a;"></div>
<div style="left:716px;top:203px;height:11px;line-height:11px;width:12px;text-align:right;white-space:nowrap;font-size:10px;color:#4a4a5a;">15</div>
<div style="left:739px;top:203px;width:1px;height:2px;background:#666;"></div>
<div style="left:749px;top:203px;width:1px;height:6px;background:#555;"></div>
<div style="left:758px;top:203px;width:1px;height:2px;background:#666;"></div>
<div style="left:768px;top:203px;width:1px;height:11px;background:#5a5a5a;"></div>
<div style="left:754px;top:203px;height:11px;line-height:11px;width:12px;text-align:right;white-space:nowrap;font-size:10px;color:#4a4a5a;">16</div>
<div style="left:777px;top:203px;width:1px;height:2px;background:#666;"></div>
<div style="left:787px;top:203px;width:1px;height:6px;background:#555;"></div>
<div style="left:796px;top:203px;width:1px;height:2px;background:#666;"></div>
<div style="left:806px;top:203px;width:1px;height:11px;background:#5a5a5a;"></div>
<div style="left:792px;top:203px;height:11px;line-height:11px;width:12px;text-align:right;white-space:nowrap;font-size:10px;color:#4a4a5a;">17</div>
<div style="left:815px;top:203px;width:1px;height:2px;background:#666;"></div>
<div style="left:825px;top:203px;width:1px;height:6px;background:#555;"></div>
<div style="left:834px;top:203px;width:1px;height:2px;background:#666;"></div>
<div style="left:836px;top:202px;width:1px;height:13px;background:#6b6b6b;"></div>
<div style="left:828px;top:203px;height:11px;line-height:11px;width:7px;text-align:right;white-space:nowrap;font-size:10px;color:#4a4a5a;">1</div>
<div style="left:163px;top:214px;width:674px;height:21px;background:#dfe3e8;border-top:1px solid #c5cad2;border-bottom:1px solid #9ea6b0;"></div>
<div style="left:163px;top:214px;width:1px;height:21px;background:#c5cad2;"></div>
<div style="left:714px;top:214px;width:1px;height:21px;background:#c5cad2;"></div>
<div style="left:335px;top:214px;width:174px;height:21px;background:linear-gradient(#fbd25c,#fde38a);border:1px solid #d49a3a;"></div>
<div style="left:163px;top:217px;height:17px;line-height:17px;width:172px;text-align:center;white-space:nowrap;font-size:12px;color:#333;">A</div>
<div style="left:335px;top:217px;height:17px;line-height:17px;width:174px;text-align:center;white-space:nowrap;font-size:12px;color:#333;">B</div>
<div style="left:508px;top:217px;height:17px;line-height:17px;width:206px;text-align:center;white-space:nowrap;font-size:12px;color:#333;">C</div>
<div style="left:714px;top:217px;height:17px;line-height:17px;width:174px;text-align:center;white-space:nowrap;font-size:12px;color:#333;">D</div>
<div style="left:43px;top:248px;width:18px;height:386px;border:1px solid #7d7d7d;border-bottom:none;background:#f6f7f8;"></div>
<div style="left:44px;top:249px;width:16px;height:71px;background:#e9ecf0;"></div>
<div style="left:44px;top:282px;width:16px;height:1px;background:#6b6b6b;"></div>
<div style="left:44px;top:385px;width:12px;height:21px;background:#a6a6a6;"></div>
<div style="left:44px;top:254px;width:2px;height:1px;background:#555;"></div>
<div style="left:44px;top:263px;width:7px;height:1px;background:#555;"></div>
<div style="left:44px;top:273px;width:2px;height:1px;background:#555;"></div>
<div style="left:44px;top:292px;width:2px;height:1px;background:#555;"></div>
<div style="left:44px;top:301px;width:7px;height:1px;background:#555;"></div>
<div style="left:44px;top:311px;width:2px;height:1px;background:#555;"></div>
<div style="left:44px;top:332px;width:2px;height:1px;background:#666;"></div>
<div style="left:44px;top:342px;width:7px;height:1px;background:#555;"></div>
<div style="left:44px;top:352px;width:2px;height:1px;background:#666;"></div>
<div style="left:44px;top:362px;width:12px;height:1px;background:#5a5a5a;"></div>
<div style="left:44px;top:364px;width:10px;height:10px;font-size:9.5px;line-height:10px;color:#4a4a5a;transform:rotate(90deg);text-align:center;">1</div>
<div style="left:44px;top:371px;width:2px;height:1px;background:#666;"></div>
<div style="left:44px;top:381px;width:7px;height:1px;background:#555;"></div>
<div style="left:44px;top:391px;width:2px;height:1px;background:#666;"></div>
<div style="left:44px;top:400px;width:12px;height:1px;background:#5a5a5a;"></div>
<div style="left:44px;top:402px;width:10px;height:10px;font-size:9.5px;line-height:10px;color:#4a4a5a;transform:rotate(90deg);text-align:center;">2</div>
<div style="left:44px;top:410px;width:2px;height:1px;background:#666;"></div>
<div style="left:44px;top:420px;width:7px;height:1px;background:#555;"></div>
<div style="left:44px;top:429px;width:2px;height:1px;background:#666;"></div>
<div style="left:44px;top:439px;width:12px;height:1px;background:#5a5a5a;"></div>
<div style="left:44px;top:441px;width:10px;height:10px;font-size:9.5px;line-height:10px;color:#4a4a5a;transform:rotate(90deg);text-align:center;">3</div>
<div style="left:44px;top:449px;width:2px;height:1px;background:#666;"></div>
<div style="left:44px;top:458px;width:7px;height:1px;background:#555;"></div>
<div style="left:44px;top:468px;width:2px;height:1px;background:#666;"></div>
<div style="left:44px;top:478px;width:12px;height:1px;background:#5a5a5a;"></div>
<div style="left:44px;top:480px;width:10px;height:10px;font-size:9.5px;line-height:10px;color:#4a4a5a;transform:rotate(90deg);text-align:center;">4</div>
<div style="left:44px;top:487px;width:2px;height:1px;background:#666;"></div>
<div style="left:44px;top:497px;width:7px;height:1px;background:#555;"></div>
<div style="left:44px;top:507px;width:2px;height:1px;background:#666;"></div>
<div style="left:44px;top:516px;width:12px;height:1px;background:#5a5a5a;"></div>
<div style="left:44px;top:518px;width:10px;height:10px;font-size:9.5px;line-height:10px;color:#4a4a5a;transform:rotate(90deg);text-align:center;">5</div>
<div style="left:44px;top:526px;width:2px;height:1px;background:#666;"></div>
<div style="left:44px;top:536px;width:7px;height:1px;background:#555;"></div>
<div style="left:44px;top:545px;width:2px;height:1px;background:#666;"></div>
<div style="left:44px;top:555px;width:12px;height:1px;background:#5a5a5a;"></div>
<div style="left:44px;top:557px;width:10px;height:10px;font-size:9.5px;line-height:10px;color:#4a4a5a;transform:rotate(90deg);text-align:center;">6</div>
<div style="left:44px;top:565px;width:2px;height:1px;background:#666;"></div>
<div style="left:44px;top:574px;width:7px;height:1px;background:#555;"></div>
<div style="left:44px;top:584px;width:2px;height:1px;background:#666;"></div>
<div style="left:44px;top:594px;width:12px;height:1px;background:#5a5a5a;"></div>
<div style="left:44px;top:596px;width:10px;height:10px;font-size:9.5px;line-height:10px;color:#4a4a5a;transform:rotate(90deg);text-align:center;">7</div>
<div style="left:44px;top:604px;width:2px;height:1px;background:#666;"></div>
<div style="left:44px;top:613px;width:7px;height:1px;background:#555;"></div>
<div style="left:44px;top:623px;width:2px;height:1px;background:#666;"></div>
<div style="left:43px;top:632px;width:14px;height:1px;background:#6b6b6b;"></div>
<div style="left:56px;top:319px;width:27px;height:21px;background:#dfe3e8;border:1px solid #c5cad2;"></div>
<div style="left:56px;top:323px;height:16px;line-height:16px;width:28px;text-align:center;white-space:nowrap;font-size:12.5px;color:#333;">1</div>
<div style="left:56px;top:339px;width:27px;height:26px;background:#dfe3e8;border:1px solid #c5cad2;"></div>
<div style="left:56px;top:348px;height:16px;line-height:16px;width:28px;text-align:center;white-space:nowrap;font-size:12.5px;color:#333;">2</div>
<div style="left:56px;top:364px;width:27px;height:22px;background:#dfe3e8;border:1px solid #c5cad2;"></div>
<div style="left:56px;top:369px;height:16px;line-height:16px;width:28px;text-align:center;white-space:nowrap;font-size:12.5px;color:#333;">3</div>
<div style="left:56px;top:385px;width:27px;height:22px;background:linear-gradient(#fbd25c,#fde38a);border:1px solid #d49a3a;"></div>
<div style="left:56px;top:390px;height:16px;line-height:16px;width:28px;text-align:center;white-space:nowrap;font-size:12.5px;color:#333;">4</div>
<div style="left:56px;top:406px;width:27px;height:22px;background:#dfe3e8;border:1px solid #c5cad2;"></div>
<div style="left:56px;top:411px;height:16px;line-height:16px;width:28px;text-align:center;white-space:nowrap;font-size:12.5px;color:#333;">5</div>
<div style="left:56px;top:427px;width:27px;height:21px;background:#dfe3e8;border:1px solid #c5cad2;"></div>
<div style="left:56px;top:431px;height:16px;line-height:16px;width:28px;text-align:center;white-space:nowrap;font-size:12.5px;color:#333;">6</div>
<div style="left:56px;top:447px;width:27px;height:21px;background:#dfe3e8;border:1px solid #c5cad2;"></div>
<div style="left:56px;top:451px;height:16px;line-height:16px;width:28px;text-align:center;white-space:nowrap;font-size:12.5px;color:#333;">7</div>
<div style="left:56px;top:467px;width:27px;height:21px;background:#dfe3e8;border:1px solid #c5cad2;"></div>
<div style="left:56px;top:471px;height:16px;line-height:16px;width:28px;text-align:center;white-space:nowrap;font-size:12.5px;color:#0000ff;">8</div>
<div style="left:56px;top:487px;width:27px;height:21px;background:#dfe3e8;border:1px solid #c5cad2;"></div>
<div style="left:56px;top:491px;height:16px;line-height:16px;width:28px;text-align:center;white-space:nowrap;font-size:12.5px;color:#0000ff;">9</div>
<div style="left:56px;top:507px;width:27px;height:21px;background:#dfe3e8;border:1px solid #c5cad2;"></div>
<div style="left:56px;top:511px;height:16px;line-height:16px;width:28px;text-align:center;white-space:nowrap;font-size:12.5px;color:#0000ff;">10</div>
<div style="left:56px;top:527px;width:27px;height:21px;background:#dfe3e8;border:1px solid #c5cad2;"></div>
<div style="left:56px;top:531px;height:16px;line-height:16px;width:28px;text-align:center;white-space:nowrap;font-size:12.5px;color:#0000ff;">11</div>
<div style="left:56px;top:547px;width:27px;height:21px;background:#dfe3e8;border:1px solid #c5cad2;"></div>
<div style="left:56px;top:551px;height:16px;line-height:16px;width:28px;text-align:center;white-space:nowrap;font-size:12.5px;color:#0000ff;">12</div>
<div style="left:56px;top:567px;width:27px;height:21px;background:#dfe3e8;border:1px solid #c5cad2;"></div>
<div style="left:56px;top:571px;height:16px;line-height:16px;width:28px;text-align:center;white-space:nowrap;font-size:12.5px;color:#0000ff;">14</div>
<div style="left:56px;top:587px;width:27px;height:21px;background:#dfe3e8;border:1px solid #c5cad2;"></div>
<div style="left:56px;top:591px;height:16px;line-height:16px;width:28px;text-align:center;white-space:nowrap;font-size:12.5px;color:#0000ff;">15</div>
<div style="left:56px;top:607px;width:27px;height:21px;background:#dfe3e8;border:1px solid #c5cad2;"></div>
<div style="left:56px;top:611px;height:16px;line-height:16px;width:28px;text-align:center;white-space:nowrap;font-size:12.5px;color:#0000ff;">16</div>
<div style="left:56px;top:627px;width:27px;height:8px;background:#dfe3e8;border:1px solid #c5cad2;"></div>
<div style="left:95px;top:247px;width:743px;height:387px;background:#fff;box-shadow:-1px -1px 7px 1px rgba(90,100,115,0.45);"></div>
<div style="left:838px;top:199px;width:16px;height:435px;background:#dee2e8;"></div>
<div style="left:840px;top:200px;width:13px;height:7px;background:#fff;border:1px solid #8a94a0;"></div>
<div style="left:843px;top:203px;width:7px;height:1px;background:#8a94a0;"></div>
<svg style="left:840px;top:211px;" width="12" height="7" viewBox="0 0 12 7"><path d="M0.5 6.5L6 1L11.5 6.5Z" fill="#444"/></svg>
<div style="left:838px;top:224px;width:15px;height:26px;background:linear-gradient(90deg,#f6f7f9,#e8ebef);border:1px solid #a9b1bc;border-radius:2px;"></div>
<div style="left:843px;top:233px;width:7px;height:1px;background:#7a828c;"></div>
<div style="left:843px;top:235px;width:7px;height:1px;background:#7a828c;"></div>
<div style="left:843px;top:237px;width:7px;height:1px;background:#7a828c;"></div>
<div style="left:843px;top:239px;width:7px;height:1px;background:#7a828c;"></div>
<svg style="left:840px;top:622px;" width="12" height="6" viewBox="0 0 12 6"><path d="M0.5 0.5L6 6L11.5 0.5Z" fill="#444"/></svg>
<div style="left:164px;top:280px;height:18px;line-height:18px;white-space:nowrap;font-size:13px;color:#000;">Страница 1 из 6</div>
<div style="z-index:5;left:152px;top:266px;width:136px;height:60px;border:5px solid #ff0000;border-radius:13px;box-shadow:2px 3px 4px rgba(0,0,0,0.45), inset 2px 3px 4px rgba(0,0,0,0.35);"></div>
<div style="left:163px;top:339px;width:675px;height:1px;background:#d9d9d9;"></div>
<div style="left:163px;top:364px;width:675px;height:1px;background:#d9d9d9;"></div>
<div style="left:163px;top:385px;width:675px;height:1px;background:#d9d9d9;"></div>
<div style="left:163px;top:406px;width:675px;height:1px;background:#d9d9d9;"></div>
<div style="left:163px;top:427px;width:675px;height:1px;background:#d9d9d9;"></div>
<div style="left:163px;top:447px;width:675px;height:1px;background:#d9d9d9;"></div>
<div style="left:163px;top:319px;width:675px;height:1px;background:#e4e4e4;"></div>
<div style="left:162px;top:319px;width:1px;height:128px;background:#d9d9d9;"></div>
<div style="left:335px;top:319px;width:1px;height:128px;background:#d9d9d9;"></div>
<div style="left:508px;top:319px;width:1px;height:20px;background:#d9d9d9;"></div>
<div style="left:508px;top:385px;width:1px;height:62px;background:#d9d9d9;"></div>
<div style="left:714px;top:319px;width:1px;height:20px;background:#d9d9d9;"></div>
<div style="left:714px;top:385px;width:1px;height:62px;background:#d9d9d9;"></div>
<div style="left:400px;top:344px;height:18px;line-height:18px;width:482px;text-align:center;white-space:nowrap;font-size:16.2px;font-weight:bold;color:#000;">Таблица заработной платы персонала</div>
<div style="left:540px;top:368px;height:17px;line-height:17px;width:202px;text-align:center;white-space:nowrap;font-size:14.5px;font-weight:bold;color:#000;">за 2016 год</div>
<div style="left:334px;top:384px;width:176px;height:24px;border:3px solid #000;"></div>
<div style="left:505px;top:403px;width:7px;height:7px;background:#fff;"></div>
<div style="left:506px;top:404px;width:5px;height:5px;background:#000;"></div>
<div style="left:163px;top:447px;width:675px;height:21px;background:#60497a;"></div>
<div style="left:335px;top:447px;width:503px;height:1px;background:#000;"></div>
<div style="left:163px;top:467px;width:675px;height:1px;background:#000;"></div>
<div style="left:335px;top:447px;width:1px;height:187px;background:#000;"></div>
<div style="left:508px;top:447px;width:1px;height:187px;background:#000;"></div>
<div style="left:714px;top:447px;width:1px;height:187px;background:#000;"></div>
<div style="left:163px;top:450px;height:17px;line-height:17px;width:172px;text-align:center;white-space:nowrap;font-size:13.6px;font-weight:bold;color:#fff;">Имя</div>
<div style="left:335px;top:450px;height:17px;line-height:17px;width:173px;text-align:center;white-space:nowrap;font-size:13.6px;font-weight:bold;color:#fff;">Пол</div>
<div style="left:508px;top:450px;height:17px;line-height:17px;width:206px;text-align:center;white-space:nowrap;font-size:13.6px;font-weight:bold;color:#fff;font-size:12.8px;">Категория персонала</div>
<div style="left:714px;top:450px;height:17px;line-height:17px;width:174px;text-align:center;white-space:nowrap;font-size:13.6px;font-weight:bold;color:#fff;">Дата</div>
<div style="left:318px;top:449px;width:17px;height:17px;background:linear-gradient(#ffffff,#e8eaee);border:1px solid #c8ccd2;"></div>
<svg style="left:322px;top:455px;" width="9" height="5" viewBox="0 0 9 5"><path d="M0 0H9L4.5 5Z" fill="#666"/></svg>
<div style="left:491px;top:449px;width:17px;height:17px;background:linear-gradient(#ffffff,#e8eaee);border:1px solid #c8ccd2;"></div>
<svg style="left:495px;top:455px;" width="9" height="5" viewBox="0 0 9 5"><path d="M0 0H9L4.5 5Z" fill="#666"/></svg>
<div style="left:697px;top:449px;width:17px;height:17px;background:linear-gradient(#ffffff,#e8eaee);border:1px solid #c8ccd2;"></div>
<svg style="left:701px;top:455px;" width="9" height="5" viewBox="0 0 9 5"><path d="M0 0H9L4.5 5Z" fill="#666"/></svg>
<div style="left:163px;top:468px;width:172px;height:20px;background:#92d050;"></div>
<div style="left:163px;top:487px;width:675px;height:1px;background:#000;"></div>
<div style="left:165px;top:470px;height:18px;line-height:18px;white-space:nowrap;font-size:13.6px;color:#000;">Николаев А. Д.</div>
<div style="left:335px;top:470px;height:18px;line-height:18px;width:173px;text-align:center;white-space:nowrap;font-size:13.6px;color:#000;">муж.</div>
<div style="left:508px;top:470px;height:18px;line-height:18px;width:206px;text-align:center;white-space:nowrap;font-size:13.6px;color:#000;">Основной персонал</div>
<div style="left:714px;top:470px;height:18px;line-height:18px;width:119px;text-align:right;white-space:nowrap;font-size:13.6px;color:#000;font-size:12.8px;">25.05.2016</div>
<div style="left:163px;top:488px;width:172px;height:20px;background:#92d050;"></div>
<div style="left:163px;top:507px;width:675px;height:1px;background:#000;"></div>
<div style="left:165px;top:490px;height:18px;line-height:18px;white-space:nowrap;font-size:13.6px;color:#000;">Сафронова В. М.</div>
<div style="left:335px;top:490px;height:18px;line-height:18px;width:173px;text-align:center;white-space:nowrap;font-size:13.6px;color:#000;">жен.</div>
<div style="left:508px;top:490px;height:18px;line-height:18px;width:206px;text-align:center;white-space:nowrap;font-size:13.6px;color:#000;">Основной персонал</div>
<div style="left:714px;top:490px;height:18px;line-height:18px;width:119px;text-align:right;white-space:nowrap;font-size:13.6px;color:#000;font-size:12.8px;">25.05.2016</div>
<div style="left:163px;top:508px;width:172px;height:20px;background:#92d050;"></div>
<div style="left:163px;top:527px;width:675px;height:1px;background:#000;"></div>
<div style="left:165px;top:510px;height:18px;line-height:18px;white-space:nowrap;font-size:13.6px;color:#000;">Коваль Л. П.</div>
<div style="left:335px;top:510px;height:18px;line-height:18px;width:173px;text-align:center;white-space:nowrap;font-size:13.6px;color:#000;">жен.</div>
<div style="left:508px;top:510px;height:18px;line-height:18px;width:206px;text-align:center;white-space:nowrap;font-size:13.6px;color:#000;">Вспомогательный персонал</div>
<div style="left:714px;top:510px;height:18px;line-height:18px;width:119px;text-align:right;white-space:nowrap;font-size:13.6px;color:#000;font-size:12.8px;">25.05.2016</div>
<div style="left:163px;top:528px;width:172px;height:20px;background:#92d050;"></div>
<div style="left:163px;top:547px;width:675px;height:1px;background:#000;"></div>
<div style="left:165px;top:530px;height:18px;line-height:18px;white-space:nowrap;font-size:13.6px;color:#000;">Парфенов Д. Ф.</div>
<div style="left:335px;top:530px;height:18px;line-height:18px;width:173px;text-align:center;white-space:nowrap;font-size:13.6px;color:#000;">муж.</div>
<div style="left:508px;top:530px;height:18px;line-height:18px;width:206px;text-align:center;white-space:nowrap;font-size:13.6px;color:#000;">Основной персонал</div>
<div style="left:714px;top:530px;height:18px;line-height:18px;width:119px;text-align:right;white-space:nowrap;font-size:13.6px;color:#000;font-size:12.8px;">25.05.2016</div>
<div style="left:163px;top:548px;width:172px;height:20px;background:#92d050;"></div>
<div style="left:163px;top:567px;width:675px;height:1px;background:#000;"></div>
<div style="left:165px;top:550px;height:18px;line-height:18px;white-space:nowrap;font-size:13.6px;color:#000;">Петров Ф. Л.</div>
<div style="left:335px;top:550px;height:18px;line-height:18px;width:173px;text-align:center;white-space:nowrap;font-size:13.6px;color:#000;">муж.</div>
<div style="left:508px;top:550px;height:18px;line-height:18px;width:206px;text-align:center;white-space:nowrap;font-size:13.6px;color:#000;">Основной персонал</div>
<div style="left:714px;top:550px;height:18px;line-height:18px;width:119px;text-align:right;white-space:nowrap;font-size:13.6px;color:#000;font-size:12.8px;">25.05.2016</div>
<div style="left:163px;top:568px;width:172px;height:20px;background:#92d050;"></div>
<div style="left:163px;top:587px;width:675px;height:1px;background:#000;"></div>
<div style="left:165px;top:570px;height:18px;line-height:18px;white-space:nowrap;font-size:13.6px;color:#000;">Николаев А. Д.</div>
<div style="left:335px;top:570px;height:18px;line-height:18px;width:173px;text-align:center;white-space:nowrap;font-size:13.6px;color:#000;">муж.</div>
<div style="left:508px;top:570px;height:18px;line-height:18px;width:206px;text-align:center;white-space:nowrap;font-size:13.6px;color:#000;">Основной персонал</div>
<div style="left:714px;top:570px;height:18px;line-height:18px;width:119px;text-align:right;white-space:nowrap;font-size:13.6px;color:#000;font-size:12.8px;">23.06.2016</div>
<div style="left:163px;top:588px;width:172px;height:20px;background:#92d050;"></div>
<div style="left:163px;top:607px;width:675px;height:1px;background:#000;"></div>
<div style="left:165px;top:590px;height:18px;line-height:18px;white-space:nowrap;font-size:13.6px;color:#000;">Сафронова В. М.</div>
<div style="left:335px;top:590px;height:18px;line-height:18px;width:173px;text-align:center;white-space:nowrap;font-size:13.6px;color:#000;">жен.</div>
<div style="left:508px;top:590px;height:18px;line-height:18px;width:206px;text-align:center;white-space:nowrap;font-size:13.6px;color:#000;">Основной персонал</div>
<div style="left:714px;top:590px;height:18px;line-height:18px;width:119px;text-align:right;white-space:nowrap;font-size:13.6px;color:#000;font-size:12.8px;">23.06.2016</div>
<div style="left:163px;top:608px;width:172px;height:20px;background:#92d050;"></div>
<div style="left:163px;top:627px;width:675px;height:1px;background:#000;"></div>
<div style="left:165px;top:610px;height:18px;line-height:18px;white-space:nowrap;font-size:13.6px;color:#000;">Коваль Л. П.</div>
<div style="left:335px;top:610px;height:18px;line-height:18px;width:173px;text-align:center;white-space:nowrap;font-size:13.6px;color:#000;">жен.</div>
<div style="left:508px;top:610px;height:18px;line-height:18px;width:206px;text-align:center;white-space:nowrap;font-size:13.6px;color:#000;">Вспомогательный персонал</div>
<div style="left:714px;top:610px;height:18px;line-height:18px;width:119px;text-align:right;white-space:nowrap;font-size:13.6px;color:#000;font-size:12.8px;">23.06.2016</div>
<div style="left:163px;top:628px;width:172px;height:7px;background:#92d050;"></div>
<div style="left:601px;top:631px;width:4px;height:1px;background:#555;"></div>
<div style="left:335px;top:447px;width:1px;height:187px;background:#000;"></div>
<div style="left:508px;top:447px;width:1px;height:187px;background:#000;"></div>
<div style="left:714px;top:447px;width:1px;height:187px;background:#000;"></div>
<div style="left:162px;top:447px;width:1px;height:187px;background:#000;"></div>
<div style="left:39px;top:634px;width:799px;height:16px;background:#e3e7ec;"></div>
<div style="left:39px;top:649px;width:816px;height:1px;background:#9aa3ae;"></div>
<div style="left:102px;top:634px;width:736px;height:1px;background:#b9c0c9;"></div>
<svg style="left:46px;top:638px;" width="7" height="8" viewBox="0 0 7 8"><rect x="0" y="0" width="1.5" height="8" fill="#444"/><path d="M7 0V8L2 4Z" fill="#444"/></svg>
<svg style="left:62px;top:638px;" width="5" height="8" viewBox="0 0 5 8"><path d="M5 0V8L0 4Z" fill="#444"/></svg>
<svg style="left:75px;top:638px;" width="5" height="8" viewBox="0 0 5 8"><path d="M0 0V8L5 4Z" fill="#444"/></svg>
<svg style="left:90px;top:638px;" width="7" height="8" viewBox="0 0 7 8"><path d="M0 0V8L5 4Z" fill="#444"/><rect x="5.5" y="0" width="1.5" height="8" fill="#444"/></svg>
<div style="left:102px;top:634px;width:1px;height:15px;background:#b8c0ca;"></div>
<svg style="left:109px;top:634px;" width="66" height="16" viewBox="0 0 66 16"><path d="M0 15.5 L15 0.5 H66 V15.5Z" fill="#e9ecf0"/><path d="M0 15.5 L15 0.5 H66" fill="none" stroke="#b5bdc8" stroke-width="1"/></svg>
<div style="left:122px;top:635px;height:15px;line-height:15px;white-space:nowrap;font-size:12px;color:#3c3c5c;">Лист5</div>
<svg style="left:163px;top:634px;" width="67" height="16" viewBox="0 0 67 16"><path d="M0 15.5 L15 0.5 H67 V15.5Z" fill="#e9ecf0"/><path d="M0 15.5 L15 0.5 H67" fill="none" stroke="#b5bdc8" stroke-width="1"/></svg>
<div style="left:176px;top:635px;height:15px;line-height:15px;white-space:nowrap;font-size:12px;color:#3c3c5c;">Лист8</div>
<svg style="left:218px;top:634px;" width="66" height="16" viewBox="0 0 66 16"><path d="M0 15.5 L13 0.5 H66 V15.5Z" fill="#e9ecf0"/><path d="M0 15.5 L13 0.5 H66" fill="none" stroke="#b5bdc8" stroke-width="1"/></svg>
<div style="left:229px;top:635px;height:15px;line-height:15px;white-space:nowrap;font-size:12px;color:#3c3c5c;">Лист9</div>
<svg style="left:271px;top:634px;" width="73" height="16" viewBox="0 0 73 16"><path d="M0 15.5 L14 0.5 H73 V15.5Z" fill="#e9ecf0"/><path d="M0 15.5 L14 0.5 H73" fill="none" stroke="#b5bdc8" stroke-width="1"/></svg>
<div style="left:283px;top:635px;height:15px;line-height:15px;white-space:nowrap;font-size:12px;color:#3c3c5c;">Лист10</div>
<svg style="left:332px;top:634px;" width="63" height="16" viewBox="0 0 63 16"><path d="M0 15.5 L14 0.5 H62 V15.5Z" fill="#e9ecf0" stroke="#b5bdc8" stroke-width="1"/></svg>
<div style="left:344px;top:635px;height:15px;line-height:15px;white-space:nowrap;font-size:12px;color:#3c3c5c;">Лист11</div>
<svg style="left:393px;top:634px;" width="56" height="16" viewBox="0 0 56 16"><path d="M0.5 0 V15.5 H50 L55 0Z" fill="#fff"/><path d="M0.5 0V15 M50 15.5 L55 0" stroke="#b5bdc8"/></svg>
<div style="left:403px;top:635px;height:15px;line-height:15px;white-space:nowrap;font-size:12px;color:#333;"><b>Лист1</b></div>
<svg style="left:443px;top:634px;" width="62" height="16" viewBox="0 0 62 16"><path d="M0 15.5 L14 0.5 H61 V15.5Z" fill="#e9ecf0" stroke="#b5bdc8" stroke-width="1"/></svg>
<div style="left:457px;top:635px;height:15px;line-height:15px;white-space:nowrap;font-size:12px;color:#3c3c5c;">Лист2</div>
<svg style="left:496px;top:634px;" width="24" height="16" viewBox="0 0 24 16"><path d="M0 15.5 L13 0.5 H24 V15.5Z" fill="#e9ecf0" stroke="#b5bdc8" stroke-width="1"/></svg>
<div style="left:496px;top:634px;width:24px;height:15px;overflow:hidden;"><div style="left:13px;top:1px;height:15px;line-height:15px;font-size:12px;color:#3c3c5c;white-space:nowrap;">Лист3</div></div>
<div style="left:519px;top:635px;width:8px;height:14px;background:linear-gradient(90deg,#e6eaf4,#fff);border:1px solid #8a94a0;"></div>
<div style="left:523px;top:639px;width:1px;height:7px;background:#8a94a0;"></div>
<div style="left:527px;top:634px;width:311px;height:15px;background:#e3e7ec;"></div>
<svg style="left:531px;top:638px;" width="6" height="8" viewBox="0 0 6 8"><path d="M6 0V8L0 4Z" fill="#444"/></svg>
<div style="left:544px;top:635px;width:134px;height:14px;background:linear-gradient(#f6f7f9,#e6e9ed);border:1px solid #a9b1bc;border-radius:2px;"></div>
<div style="left:607px;top:639px;width:1px;height:7px;background:#7a828c;"></div>
<div style="left:609px;top:639px;width:1px;height:7px;background:#7a828c;"></div>
<div style="left:611px;top:639px;width:1px;height:7px;background:#7a828c;"></div>
<div style="left:613px;top:639px;width:1px;height:7px;background:#7a828c;"></div>
<div style="left:838px;top:634px;width:16px;height:16px;background:#e3e7ec;"></div>
<svg style="left:818px;top:638px;" width="6" height="8" viewBox="0 0 6 8"><path d="M0 0V8L6 4Z" fill="#444"/></svg>
<div style="left:830px;top:636px;width:8px;height:13px;background:#fff;border:1px solid #8a94a0;"></div>
<div style="left:833px;top:639px;width:1px;height:7px;background:#8a94a0;"></div>
<div style="left:39px;top:650px;width:816px;height:23px;background:linear-gradient(#f3f5f7,#e6e9ed 50%,#d9dde3);border-bottom:1px solid #a9b1bc;"></div>
<div style="left:48px;top:653px;height:16px;line-height:16px;white-space:nowrap;font-size:12px;color:#433a44;">Готово</div>
<div style="left:100px;top:653px;height:16px;line-height:16px;white-space:nowrap;font-size:12px;color:#433a44;font-size:11.7px;">Фильтр: отбор</div>
<div style="left:187px;top:652px;width:1px;height:19px;background:#bcc3cc;"></div>
<svg style="left:197px;top:654px;" width="16" height="13" viewBox="0 0 16 13"><rect x="1.5" y="2.5" width="14" height="10" fill="#fff" stroke="#3a6ab0"/><rect x="1.5" y="2.5" width="14" height="3" fill="#5a8ad8"/><path d="M4 8H13M4 10.5H13M8 6V12.5" stroke="#6a9ad8"/><circle cx="4" cy="3" r="3" fill="#e03020"/></svg>
<div style="left:222px;top:652px;width:1px;height:19px;background:#bcc3cc;"></div>
<div style="left:232px;top:653px;height:16px;line-height:16px;white-space:nowrap;font-size:12px;color:#433a44;font-size:11.3px;">Страница: 1 из 6</div>
<div style="left:597px;top:652px;width:1px;height:19px;background:#bcc3cc;"></div>
<svg style="left:605px;top:656px;" width="13" height="10" viewBox="0 0 13 10"><rect x="0" y="0" width="13" height="10" fill="#6a6e74"/><g fill="#fff"><rect x="1" y="1" width="3" height="2"/><rect x="5" y="1" width="3" height="2"/><rect x="9" y="1" width="3" height="2"/><rect x="1" y="4" width="3" height="2"/><rect x="5" y="4" width="3" height="2"/><rect x="9" y="4" width="3" height="2"/><rect x="1" y="7" width="3" height="2"/><rect x="5" y="7" width="3" height="2"/><rect x="9" y="7" width="3" height="2"/></g></svg>
<div style="left:621px;top:652px;width:18px;height:19px;border:1px solid #e0a840;border-radius:3px;background:linear-gradient(#fff2b8,#fde08a 50%,#fbd46a);"></div>
<svg style="left:623px;top:655px;" width="14" height="12" viewBox="0 0 14 12"><rect x="0" y="0" width="14" height="12" fill="#6a6e74"/><rect x="1" y="1" width="12" height="10" fill="#a8acb2"/><rect x="4" y="2" width="6" height="8" fill="#f4f4f4" stroke="#555" stroke-width="0.8"/><path d="M5 4.5H9M5 6.5H9M5 8.5H9" stroke="#999" stroke-width="0.8"/></svg>
<svg style="left:642px;top:655px;" width="14" height="12" viewBox="0 0 14 12"><rect x="0" y="0" width="14" height="12" fill="#6a6e74"/><rect x="1" y="1" width="12" height="10" fill="#b8bcc2"/><rect x="1" y="1" width="3.5" height="6" fill="#fff"/><rect x="5.5" y="1" width="3.5" height="6" fill="#fff"/><rect x="1" y="8" width="12" height="3" fill="#d0d3d8"/></svg>
<div style="left:667px;top:653px;height:16px;line-height:16px;white-space:nowrap;font-size:12px;color:#433a44;font-size:11px;">100%</div>
<div style="left:703px;top:652px;width:17px;height:17px;border-radius:50%;border:1px solid #8a929c;background:radial-gradient(circle at 50% 30%,#ffffff,#e4e7eb 70%,#cfd4da);"></div>
<div style="left:707px;top:659px;width:9px;height:2px;background:#444;"></div>
<div style="left:720px;top:660px;width:98px;height:1px;background:#8a929c;"></div>
<div style="left:720px;top:661px;width:98px;height:1px;background:#fff;"></div>
<svg style="left:764px;top:654px;" width="11" height="13" viewBox="0 0 11 13"><path d="M0.5 0.5H10.5V8L5.5 12.5L0.5 8Z" fill="#f4f5f7" stroke="#6a727c"/></svg>
<div style="left:819px;top:652px;width:17px;height:17px;border-radius:50%;border:1px solid #8a929c;background:radial-gradient(circle at 50% 30%,#ffffff,#e4e7eb 70%,#cfd4da);"></div>
<div style="left:823px;top:659px;width:9px;height:2px;background:#444;"></div>
<div style="left:826px;top:656px;width:2px;height:9px;background:#444;"></div>
<svg style="left:843px;top:662px;" width="10" height="10" viewBox="0 0 10 10"><rect x="7" y="1" width="2" height="2" fill="#b0b6be"/><rect x="4" y="4" width="2" height="2" fill="#b0b6be"/><rect x="7" y="4" width="2" height="2" fill="#b0b6be"/><rect x="1" y="7" width="2" height="2" fill="#b0b6be"/><rect x="4" y="7" width="2" height="2" fill="#b0b6be"/><rect x="7" y="7" width="2" height="2" fill="#b0b6be"/></svg>
<div style="left:39px;top:83px;width:816px;height:590px;border:1px solid #66707c;border-top-color:#9aa4b0;"></div>
</body></html>
